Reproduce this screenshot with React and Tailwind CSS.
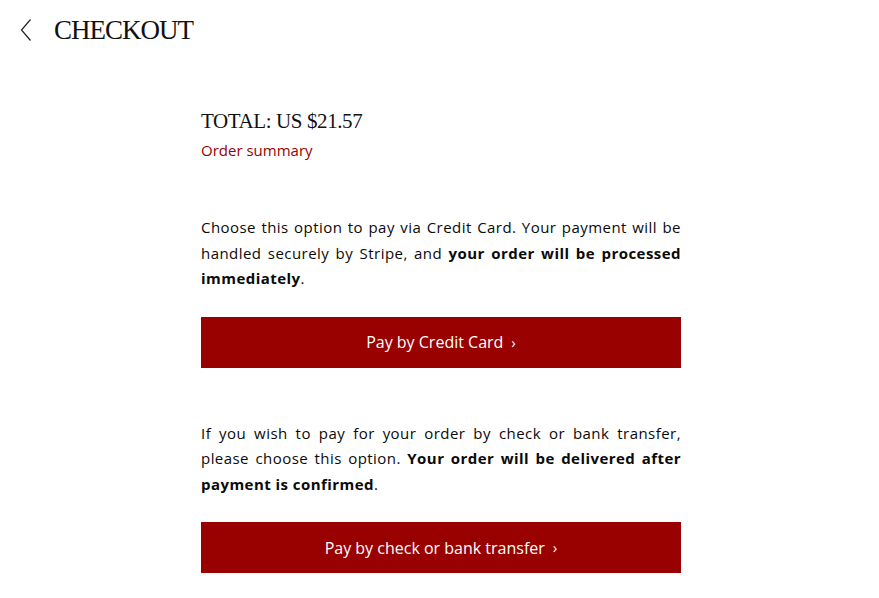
export default function App() {
  const body = { fontFamily: "'Open Sans', Roboto, 'Liberation Sans', sans-serif" };
  const serif = { fontFamily: "'Liberation Serif', 'DejaVu Serif', serif" };

  return (
    <div className="min-h-screen bg-white text-black" style={body}>
      {/* header */}
      <div className="flex items-center h-[60px] pl-[20px]">
        <button className="w-[12px] h-[24px] flex items-center">
          <svg width="12" height="24" viewBox="0 0 12 24" fill="none">
            <path d="M10.5 1.5 L1.5 12 L10.5 22.5" stroke="#222" strokeWidth="1.2" />
          </svg>
        </button>
        <h1 className="ml-[22px] text-[27px] leading-none tracking-[-1px] text-[#111]" style={serif}>
          CHECKOUT
        </h1>
      </div>

      <div className="ml-[201px] w-[480px] pt-[46px]">
        <h2 className="text-[21px] leading-[30px] tracking-[-0.4px] text-[#111]" style={serif}>
          TOTAL: US $21.57
        </h2>
        <a className="block mt-[4px] text-[15px] leading-[20px] text-[#990000]">Order summary</a>

        <p className="mt-[55px] text-[15px] leading-[25.5px] tracking-[0.45px] text-justify text-[#0a0a0a]">
          Choose this option to pay via Credit Card. Your payment will be handled securely by Stripe, and{" "}
          <b className="font-bold">your order will be processed immediately</b>.
        </p>
        <button className="mt-[25px] w-full h-[51px] bg-[#990000] text-white text-[16px] flex items-center justify-center">
          Pay by Credit Card <span className="ml-[8px] text-[15px]">›</span>
        </button>

        <p className="mt-[53px] text-[15px] leading-[25.5px] tracking-[0.45px] text-justify text-[#0a0a0a]">
          If you wish to pay for your order by check or bank transfer, please choose this option.{" "}
          <b className="font-bold">Your order will be delivered after payment is confirmed</b>.
        </p>
        <button className="mt-[25px] w-full h-[51px] bg-[#990000] text-white text-[16px] flex items-center justify-center">
          Pay by check or bank transfer <span className="ml-[8px] text-[15px]">›</span>
        </button>
      </div>
    </div>
  );
}
